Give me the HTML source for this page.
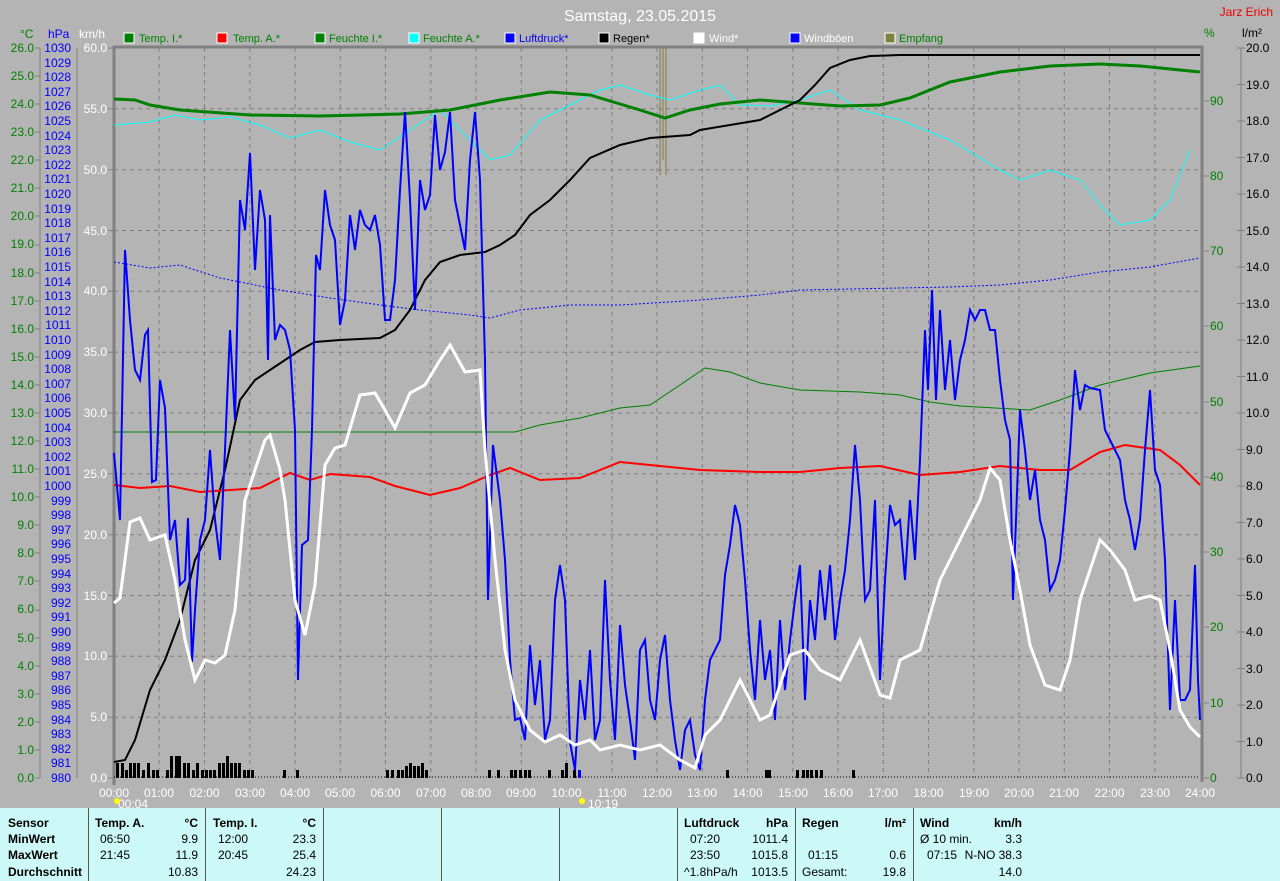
<!DOCTYPE html>
<html><head><meta charset="utf-8"><style>
body{margin:0;width:1280px;height:881px;background:#b4b4b4;overflow:hidden;font-family:"Liberation Sans",sans-serif}
svg{position:absolute;left:0;top:0}
#tbl{position:absolute;left:0;top:808px;width:1280px;height:73px;background:#ccf8f8;font-size:12px;color:#000}
.d{position:absolute;top:0;height:73px;width:1px;background:#555}
.t{position:absolute;white-space:nowrap}
.b{font-weight:bold}
.r{text-align:right}
</style></head><body>
<svg width="1280" height="808" viewBox="0 0 1280 808" font-family="Liberation Sans, sans-serif">
<text x="640" y="21" fill="#fff" font-size="16" text-anchor="middle">Samstag, 23.05.2015</text>
<text x="1273" y="16" fill="#e00" font-size="12" text-anchor="end">Jarz Erich</text>
<g font-size="12">
<text x="20" y="38" fill="#008000">°C</text>
<text x="48" y="38" fill="#0000ff">hPa</text>
<text x="79" y="38" fill="#fff">km/h</text>
<text x="1204" y="37" fill="#008000">%</text>
<text x="1242" y="37" fill="#000">l/m²</text>
</g>
<g font-size="11">
<rect x="124" y="33" width="10" height="10" fill="#008000" stroke="#fff"/><text x="139" y="42" fill="#008000">Temp. I.*</text>
<rect x="217" y="33" width="10" height="10" fill="#f00" stroke="#fff"/><text x="233" y="42" fill="#008000">Temp. A.*</text>
<rect x="315" y="33" width="10" height="10" fill="#008000" stroke="#fff"/><text x="329" y="42" fill="#008000">Feuchte I.*</text>
<rect x="409" y="33" width="10" height="10" fill="#0ff" stroke="#fff"/><text x="423" y="42" fill="#008000">Feuchte A.*</text>
<rect x="505" y="33" width="10" height="10" fill="#00f" stroke="#fff"/><text x="519" y="42" fill="#0000ff">Luftdruck*</text>
<rect x="599" y="33" width="10" height="10" fill="#000" stroke="#fff"/><text x="613" y="42" fill="#000">Regen*</text>
<rect x="694" y="33" width="10" height="10" fill="#fff" stroke="#fff"/><text x="709" y="42" fill="#fff">Wind*</text>
<rect x="790" y="33" width="10" height="10" fill="#00f" stroke="#fff"/><text x="804" y="42" fill="#fff">Windböen</text>
<rect x="885" y="33" width="10" height="10" fill="#808040" stroke="#fff"/><text x="899" y="42" fill="#008000">Empfang</text>
</g>
<!-- axes lines -->
<g stroke="#808080" stroke-width="1">
<line x1="40" y1="48" x2="40" y2="778"/><line x1="77" y1="48" x2="77" y2="778"/><line x1="1241" y1="48" x2="1241" y2="778"/>
</g>
<!-- grid -->
<g stroke="#808080" stroke-dasharray="4,4" stroke-width="1">
<line x1="114" y1="108.8" x2="1200" y2="108.8"/><line x1="114" y1="169.7" x2="1200" y2="169.7"/><line x1="114" y1="230.5" x2="1200" y2="230.5"/><line x1="114" y1="291.3" x2="1200" y2="291.3"/><line x1="114" y1="352.2" x2="1200" y2="352.2"/><line x1="114" y1="413" x2="1200" y2="413"/><line x1="114" y1="473.8" x2="1200" y2="473.8"/><line x1="114" y1="534.7" x2="1200" y2="534.7"/><line x1="114" y1="595.5" x2="1200" y2="595.5"/><line x1="114" y1="656.3" x2="1200" y2="656.3"/><line x1="114" y1="717.2" x2="1200" y2="717.2"/>
<line x1="159" y1="48" x2="159" y2="778"/><line x1="204.5" y1="48" x2="204.5" y2="778"/><line x1="249.8" y1="48" x2="249.8" y2="778"/><line x1="295" y1="48" x2="295" y2="778"/><line x1="340.3" y1="48" x2="340.3" y2="778"/><line x1="385.5" y1="48" x2="385.5" y2="778"/><line x1="430.8" y1="48" x2="430.8" y2="778"/><line x1="476" y1="48" x2="476" y2="778"/><line x1="521.3" y1="48" x2="521.3" y2="778"/><line x1="566.5" y1="48" x2="566.5" y2="778"/><line x1="611.8" y1="48" x2="611.8" y2="778"/><line x1="657" y1="48" x2="657" y2="778"/><line x1="702.3" y1="48" x2="702.3" y2="778"/><line x1="747.5" y1="48" x2="747.5" y2="778"/><line x1="792.8" y1="48" x2="792.8" y2="778"/><line x1="838" y1="48" x2="838" y2="778"/><line x1="883.3" y1="48" x2="883.3" y2="778"/><line x1="928.5" y1="48" x2="928.5" y2="778"/><line x1="973.8" y1="48" x2="973.8" y2="778"/><line x1="1019" y1="48" x2="1019" y2="778"/><line x1="1064.3" y1="48" x2="1064.3" y2="778"/><line x1="1109.5" y1="48" x2="1109.5" y2="778"/><line x1="1154.8" y1="48" x2="1154.8" y2="778"/>
</g>
<!-- frame -->
<path d="M114 785 V47 H1202 V782" fill="none" stroke="#808080" stroke-width="3"/>
<!-- °C labels -->
<g font-size="12" fill="#008000" text-anchor="end">
<text x="34" y="52">26.0</text><text x="34" y="80">25.0</text><text x="34" y="108">24.0</text><text x="34" y="136">23.0</text><text x="34" y="164">22.0</text><text x="34" y="192">21.0</text><text x="34" y="220">20.0</text><text x="34" y="248">19.0</text><text x="34" y="277">18.0</text><text x="34" y="305">17.0</text><text x="34" y="333">16.0</text><text x="34" y="361">15.0</text><text x="34" y="389">14.0</text><text x="34" y="417">13.0</text><text x="34" y="445">12.0</text><text x="34" y="473">11.0</text><text x="34" y="501">10.0</text><text x="34" y="529">9.0</text><text x="34" y="557">8.0</text><text x="34" y="585">7.0</text><text x="34" y="613">6.0</text><text x="34" y="642">5.0</text><text x="34" y="670">4.0</text><text x="34" y="698">3.0</text><text x="34" y="726">2.0</text><text x="34" y="754">1.0</text><text x="34" y="782">0.0</text>
</g>
<g stroke="#808080"><path d="M35 48h5M35 76h5M35 104h5M35 132h5M35 160h5M35 188h5M35 216h5M35 245h5M35 273h5M35 301h5M35 329h5M35 357h5M35 385h5M35 413h5M35 441h5M35 469h5M35 497h5M35 525h5M35 553h5M35 581h5M35 610h5M35 638h5M35 666h5M35 694h5M35 722h5M35 750h5M35 778h5"/></g>
<!-- hPa labels -->
<g font-size="12" fill="#0000ff" text-anchor="end">
<text x="71" y="52">1030</text><text x="71" y="67">1029</text><text x="71" y="81">1028</text><text x="71" y="96">1027</text><text x="71" y="110">1026</text><text x="71" y="125">1025</text><text x="71" y="140">1024</text><text x="71" y="154">1023</text><text x="71" y="169">1022</text><text x="71" y="183">1021</text><text x="71" y="198">1020</text><text x="71" y="213">1019</text><text x="71" y="227">1018</text><text x="71" y="242">1017</text><text x="71" y="256">1016</text><text x="71" y="271">1015</text><text x="71" y="286">1014</text><text x="71" y="300">1013</text><text x="71" y="315">1012</text><text x="71" y="329">1011</text><text x="71" y="344">1010</text><text x="71" y="359">1009</text><text x="71" y="373">1008</text><text x="71" y="388">1007</text><text x="71" y="402">1006</text><text x="71" y="417">1005</text><text x="71" y="432">1004</text><text x="71" y="446">1003</text><text x="71" y="461">1002</text><text x="71" y="475">1001</text><text x="71" y="490">1000</text><text x="71" y="505">999</text><text x="71" y="519">998</text><text x="71" y="534">997</text><text x="71" y="548">996</text><text x="71" y="563">995</text><text x="71" y="578">994</text><text x="71" y="592">993</text><text x="71" y="607">992</text><text x="71" y="621">991</text><text x="71" y="636">990</text><text x="71" y="651">989</text><text x="71" y="665">988</text><text x="71" y="680">987</text><text x="71" y="694">986</text><text x="71" y="709">985</text><text x="71" y="724">984</text><text x="71" y="738">983</text><text x="71" y="753">982</text><text x="71" y="767">981</text><text x="71" y="782">980</text>
</g>
<!-- km/h labels -->
<g font-size="12" fill="#fff" text-anchor="end">
<text x="107" y="52">60.0</text><text x="107" y="113">55.0</text><text x="107" y="174">50.0</text><text x="107" y="235">45.0</text><text x="107" y="295">40.0</text><text x="107" y="356">35.0</text><text x="107" y="417">30.0</text><text x="107" y="478">25.0</text><text x="107" y="539">20.0</text><text x="107" y="600">15.0</text><text x="107" y="660">10.0</text><text x="107" y="721">5.0</text><text x="107" y="782">0.0</text>
</g>
<g stroke="#808080"><path d="M108 48h5M108 108.8h5M108 169.7h5M108 230.5h5M108 291.3h5M108 352.2h5M108 413h5M108 473.8h5M108 534.7h5M108 595.5h5M108 656.3h5M108 717.2h5M108 778h5"/></g>
<!-- % labels -->
<g font-size="12" fill="#008000">
<text x="1210" y="105">90</text><text x="1210" y="180">80</text><text x="1210" y="255">70</text><text x="1210" y="330">60</text><text x="1210" y="406">50</text><text x="1210" y="481">40</text><text x="1210" y="556">30</text><text x="1210" y="631">20</text><text x="1210" y="707">10</text><text x="1210" y="782">0</text>
</g>
<g stroke="#808080"><path d="M1204 101h5M1204 176h5M1204 251h5M1204 326h5M1204 402h5M1204 477h5M1204 552h5M1204 627h5M1204 703h5M1204 778h5"/></g>
<!-- l/m2 labels -->
<g font-size="12" fill="#000">
<text x="1246" y="52">20.0</text><text x="1246" y="89">19.0</text><text x="1246" y="125">18.0</text><text x="1246" y="162">17.0</text><text x="1246" y="198">16.0</text><text x="1246" y="235">15.0</text><text x="1246" y="271">14.0</text><text x="1246" y="308">13.0</text><text x="1246" y="344">12.0</text><text x="1246" y="381">11.0</text><text x="1246" y="417">10.0</text><text x="1246" y="454">9.0</text><text x="1246" y="490">8.0</text><text x="1246" y="527">7.0</text><text x="1246" y="563">6.0</text><text x="1246" y="600">5.0</text><text x="1246" y="636">4.0</text><text x="1246" y="673">3.0</text><text x="1246" y="709">2.0</text><text x="1246" y="746">1.0</text><text x="1246" y="782">0.0</text>
</g>
<g stroke="#808080"><path d="M1237 48h8M1237 84.5h8M1237 121h8M1237 157.5h8M1237 194h8M1237 230.5h8M1237 267h8M1237 303.5h8M1237 340h8M1237 376.5h8M1237 413h8M1237 449.5h8M1237 486h8M1237 522.5h8M1237 559h8M1237 595.5h8M1237 632h8M1237 668.5h8M1237 705h8M1237 741.5h8M1237 778h8"/></g>
<!-- time labels -->
<g font-size="12" fill="#fff" text-anchor="middle">
<text x="114" y="797">00:00</text><text x="159" y="797">01:00</text><text x="204.5" y="797">02:00</text><text x="250" y="797">03:00</text><text x="295" y="797">04:00</text><text x="340" y="797">05:00</text><text x="385.5" y="797">06:00</text><text x="431" y="797">07:00</text><text x="476" y="797">08:00</text><text x="521" y="797">09:00</text><text x="566.5" y="797">10:00</text><text x="612" y="797">11:00</text><text x="657" y="797">12:00</text><text x="702" y="797">13:00</text><text x="747.5" y="797">14:00</text><text x="793" y="797">15:00</text><text x="838" y="797">16:00</text><text x="883" y="797">17:00</text><text x="928.5" y="797">18:00</text><text x="974" y="797">19:00</text><text x="1019" y="797">20:00</text><text x="1064" y="797">21:00</text><text x="1109.5" y="797">22:00</text><text x="1155" y="797">23:00</text><text x="1200" y="797">24:00</text>
<text x="133" y="808">00:04</text><text x="603" y="808">10:19</text>
</g>
<circle cx="117" cy="801" r="3" fill="#ff0"/><circle cx="582" cy="801" r="3" fill="#ff0"/>
<!-- rain bars -->
<line x1="114" y1="777" x2="1200" y2="777" stroke="#000" stroke-dasharray="1,2"/>
<g fill="#000">
<rect x="116" y="763" width="3" height="15"/><rect x="121" y="763" width="3" height="15"/><rect x="125" y="770" width="3" height="8"/><rect x="129" y="763" width="3" height="15"/><rect x="133" y="763" width="3" height="15"/><rect x="137" y="763" width="3" height="15"/><rect x="142" y="770" width="3" height="8"/><rect x="147" y="763" width="3" height="15"/><rect x="152" y="770" width="3" height="8"/><rect x="156" y="770" width="3" height="8"/>
<rect x="166" y="770" width="3" height="8"/><rect x="170" y="756" width="3" height="22"/><rect x="175" y="756" width="3" height="22"/><rect x="178" y="756" width="3" height="22"/><rect x="183" y="763" width="3" height="15"/><rect x="187" y="763" width="3" height="15"/><rect x="192" y="770" width="3" height="8"/><rect x="196" y="763" width="3" height="15"/><rect x="201" y="770" width="3" height="8"/><rect x="205" y="770" width="3" height="8"/><rect x="209" y="770" width="3" height="8"/><rect x="213" y="770" width="3" height="8"/><rect x="218" y="763" width="3" height="15"/><rect x="222" y="763" width="3" height="15"/><rect x="226" y="756" width="3" height="22"/><rect x="230" y="763" width="3" height="15"/><rect x="234" y="763" width="3" height="15"/><rect x="238" y="763" width="3" height="15"/><rect x="243" y="770" width="3" height="8"/><rect x="247" y="770" width="3" height="8"/><rect x="251" y="770" width="3" height="8"/>
<rect x="283" y="770" width="3" height="8"/><rect x="296" y="770" width="3" height="8"/>
<rect x="386" y="770" width="3" height="8"/><rect x="391" y="770" width="3" height="8"/><rect x="397" y="770" width="3" height="8"/><rect x="401" y="770" width="3" height="8"/><rect x="405" y="766" width="3" height="12"/><rect x="409" y="763" width="3" height="15"/><rect x="413" y="766" width="3" height="12"/><rect x="417" y="766" width="3" height="12"/><rect x="421" y="763" width="3" height="15"/><rect x="425" y="770" width="3" height="8"/>
<rect x="488" y="770" width="3" height="8"/><rect x="497" y="770" width="3" height="8"/><rect x="510" y="770" width="3" height="8"/><rect x="514" y="770" width="3" height="8"/><rect x="519" y="770" width="3" height="8"/><rect x="524" y="770" width="3" height="8"/><rect x="528" y="770" width="3" height="8"/><rect x="548" y="770" width="3" height="8"/><rect x="561" y="770" width="3" height="8"/><rect x="565" y="763" width="3" height="15"/><rect x="573" y="770" width="3" height="8"/>
<rect x="726" y="770" width="3" height="8"/><rect x="765" y="770" width="3" height="8"/><rect x="768" y="770" width="3" height="8"/><rect x="796" y="770" width="3" height="8"/><rect x="802" y="770" width="3" height="8"/><rect x="806" y="770" width="3" height="8"/><rect x="810" y="770" width="3" height="8"/><rect x="815" y="770" width="3" height="8"/><rect x="820" y="770" width="3" height="8"/><rect x="852" y="770" width="3" height="8"/>
</g>
<rect x="578" y="770" width="3" height="8" fill="#00f"/>
<!-- empfang -->
<path d="M660 48V175M663 48V160M666 48V175" stroke="#808040" stroke-width="1" fill="none"/>
<!-- Feuchte I thin green -->
<polyline fill="none" stroke="#008000" stroke-width="1" points="114,432 515,432 540,425 580,418 620,408 650,405 680,385 705,368 730,372 760,383 800,390 860,392 900,395 930,402 960,406 1030,410 1060,400 1100,385 1150,373 1200,366"/>
<!-- Feuchte A cyan -->
<polyline fill="none" stroke="#00ffff" stroke-width="1" points="114,125 150,122 175,115 200,120 230,117 260,125 290,138 320,130 350,142 380,150 410,130 440,110 470,140 490,160 510,155 540,120 570,105 600,90 620,85 650,95 670,100 700,90 720,85 740,105 770,106 800,100 830,90 860,110 900,120 950,140 1000,170 1020,180 1050,170 1080,180 1100,205 1120,225 1150,220 1170,200 1190,150"/>
<!-- Luftdruck dotted -->
<polyline fill="none" stroke="#0000ff" stroke-width="1" stroke-dasharray="2,2" points="114,262 150,268 180,265 220,278 280,290 330,298 380,305 420,310 470,315 490,318 520,310 570,305 620,305 700,300 760,295 800,290 900,288 950,287 1000,285 1050,280 1100,272 1150,267 1200,258"/>
<!-- Temp I -->
<polyline fill="none" stroke="#008000" stroke-width="3" points="114,99 135,100 150,105 180,110 250,115 320,116 400,114 450,110 500,100 550,92 590,95 620,104 640,110 665,118 690,110 720,104 760,100 800,103 840,106 880,105 910,98 950,82 1000,72 1050,66 1100,64 1140,66 1180,70 1200,72"/>
<!-- Regen cumulative -->
<polyline fill="none" stroke="#000" stroke-width="2" points="114,762 125,760 135,740 150,690 165,660 180,620 195,560 210,530 225,470 240,400 255,380 270,370 285,360 300,350 315,342 340,340 380,338 395,330 410,310 425,280 440,262 460,255 485,252 500,245 515,235 530,215 550,200 570,180 590,158 620,145 650,138 690,135 700,130 730,125 760,120 780,110 800,100 815,85 830,68 850,60 870,56 900,55 1200,55"/>
<!-- Temp A red -->
<polyline fill="none" stroke="#ff0000" stroke-width="2" points="114,485 140,488 170,486 200,492 230,490 260,488 290,473 310,480 330,474 370,477 395,486 430,495 460,488 490,475 510,468 540,480 580,478 620,462 660,466 700,470 760,472 800,472 840,468 880,466 920,475 960,472 1000,466 1040,470 1070,470 1100,452 1125,445 1160,450 1180,465 1200,485"/>
<!-- Windböen blue -->
<polyline fill="none" stroke="#0000ff" stroke-width="2" points="114,453 120,520 125,250 130,320 135,370 140,380 145,335 148,330 152,482 156,480 160,380 165,408 170,540 175,520 180,585 185,580 188,518 192,662 195,610 200,540 205,520 210,450 215,520 220,560 225,450 230,330 235,420 240,200 245,230 250,153 255,270 260,190 265,220 268,360 270,215 275,340 280,325 285,330 290,350 295,430 298,680 302,545 308,540 312,430 316,255 320,270 325,190 330,225 335,240 340,325 345,300 350,215 355,250 360,210 365,225 370,230 375,215 380,245 385,320 390,320 395,280 400,190 405,112 410,200 415,310 420,180 425,210 430,195 435,115 440,170 445,152 450,112 455,200 460,225 465,250 470,160 475,112 480,180 485,360 488,600 493,445 500,500 505,560 510,660 515,720 520,718 525,740 530,645 535,705 540,660 545,740 550,720 555,600 560,565 565,600 570,742 575,770 580,680 585,720 590,650 595,740 600,720 605,580 610,680 615,740 620,625 625,685 630,720 635,760 640,650 645,640 650,700 655,720 660,660 665,635 670,700 675,740 680,770 685,730 690,720 695,755 700,770 705,700 710,660 720,640 725,575 730,545 735,505 740,525 745,580 750,650 755,700 760,620 765,680 770,650 775,720 780,620 785,690 790,640 795,600 800,565 805,700 810,600 815,640 820,570 825,620 830,565 835,640 840,600 845,570 850,520 855,445 860,500 865,600 870,590 875,500 880,680 885,580 890,505 895,525 900,520 905,580 910,500 915,560 920,460 925,330 928,390 932,290 936,400 940,310 945,390 950,340 955,400 960,360 965,340 970,310 975,320 980,310 985,310 990,330 995,330 1000,380 1005,420 1010,440 1013,600 1016,520 1020,410 1025,450 1030,500 1035,470 1040,520 1045,540 1050,590 1055,580 1060,560 1065,510 1070,450 1075,370 1080,410 1085,385 1090,388 1100,390 1105,430 1110,440 1115,450 1120,460 1125,500 1130,520 1135,550 1140,520 1145,450 1150,390 1155,470 1160,485 1165,560 1170,710 1175,600 1180,700 1185,700 1190,690 1195,565 1198,680 1200,720"/>
<!-- Wind white -->
<polyline fill="none" stroke="#ffffff" stroke-width="3" points="114,603 120,598 130,522 140,518 150,540 165,535 175,580 185,640 195,680 205,660 215,663 225,655 235,610 245,500 255,470 265,440 270,435 280,470 285,500 295,600 305,635 315,585 325,465 335,448 345,445 360,395 375,393 385,410 395,428 410,393 425,385 440,360 450,345 465,372 480,370 485,450 495,560 505,650 515,700 530,730 545,742 560,735 575,745 590,740 600,750 620,745 640,750 660,745 680,760 695,768 705,735 720,720 740,680 760,720 770,715 790,655 805,650 820,670 840,680 860,640 880,695 890,698 900,660 920,650 940,580 960,540 980,500 990,468 1000,480 1010,540 1020,590 1030,645 1045,685 1060,690 1070,660 1080,600 1100,540 1110,550 1125,570 1135,600 1150,596 1160,600 1170,650 1180,710 1190,727 1200,737"/>
</svg>
<div id="tbl">
<div class="d" style="left:88px"></div><div class="d" style="left:205px"></div><div class="d" style="left:323px"></div><div class="d" style="left:441px"></div><div class="d" style="left:559px"></div><div class="d" style="left:677px"></div><div class="d" style="left:795px"></div><div class="d" style="left:913px"></div>
<div class="t b" style="left:8px;top:8px">Sensor</div><div class="t b" style="left:8px;top:24px">MinWert</div><div class="t b" style="left:8px;top:40px">MaxWert</div><div class="t b" style="left:8px;top:57px">Durchschnitt</div>
<div class="t b" style="left:95px;top:8px">Temp. A.</div><div class="t b r" style="left:150px;width:48px;top:8px">°C</div>
<div class="t" style="left:100px;top:24px">06:50</div><div class="t r" style="left:150px;width:48px;top:24px">9.9</div>
<div class="t" style="left:100px;top:40px">21:45</div><div class="t r" style="left:150px;width:48px;top:40px">11.9</div>
<div class="t r" style="left:150px;width:48px;top:57px">10.83</div>
<div class="t b" style="left:213px;top:8px">Temp. I.</div><div class="t b r" style="left:268px;width:48px;top:8px">°C</div>
<div class="t" style="left:218px;top:24px">12:00</div><div class="t r" style="left:268px;width:48px;top:24px">23.3</div>
<div class="t" style="left:218px;top:40px">20:45</div><div class="t r" style="left:268px;width:48px;top:40px">25.4</div>
<div class="t r" style="left:268px;width:48px;top:57px">24.23</div>
<div class="t b" style="left:684px;top:8px">Luftdruck</div><div class="t b r" style="left:740px;width:48px;top:8px">hPa</div>
<div class="t" style="left:690px;top:24px">07:20</div><div class="t r" style="left:740px;width:48px;top:24px">1011.4</div>
<div class="t" style="left:690px;top:40px">23:50</div><div class="t r" style="left:740px;width:48px;top:40px">1015.8</div>
<div class="t" style="left:684px;top:57px">^1.8hPa/h</div><div class="t r" style="left:740px;width:48px;top:57px">1013.5</div>
<div class="t b" style="left:802px;top:8px">Regen</div><div class="t b r" style="left:858px;width:48px;top:8px">l/m²</div>
<div class="t" style="left:808px;top:40px">01:15</div><div class="t r" style="left:858px;width:48px;top:40px">0.6</div>
<div class="t" style="left:802px;top:57px">Gesamt:</div><div class="t r" style="left:858px;width:48px;top:57px">19.8</div>
<div class="t b" style="left:920px;top:8px">Wind</div><div class="t b r" style="left:970px;width:52px;top:8px">km/h</div>
<div class="t" style="left:920px;top:24px">Ø 10 min.</div><div class="t r" style="left:970px;width:52px;top:24px">3.3</div>
<div class="t" style="left:927px;top:40px">07:15</div><div class="t r" style="left:960px;width:62px;top:40px">N-NO 38.3</div>
<div class="t r" style="left:970px;width:52px;top:57px">14.0</div>
</div>
</body></html>
